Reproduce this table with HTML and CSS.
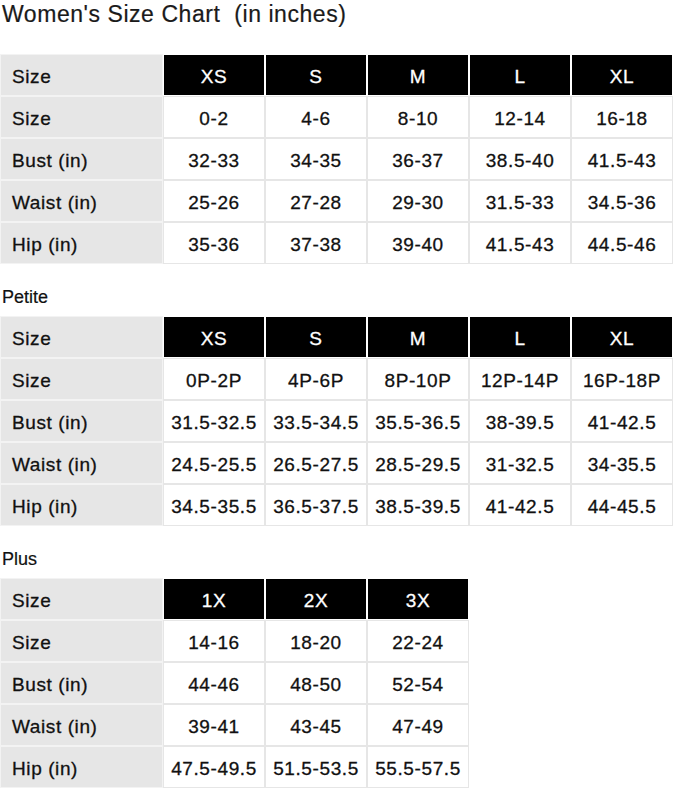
FILE: index.html
```html
<!DOCTYPE html>
<html>
<head>
<meta charset="utf-8">
<link rel="stylesheet" href="styles.css">
</head>
<body>
<h1 class="title">Women's Size Chart&nbsp; (in inches)</h1>

<div class="chart five">
  <div class="lab">Size</div>
  <div class="hd">XS</div><div class="hd">S</div><div class="hd">M</div><div class="hd">L</div><div class="hd">XL</div>
  <div class="lab">Size</div>
  <div class="v">0-2</div><div class="v">4-6</div><div class="v">8-10</div><div class="v">12-14</div><div class="v">16-18</div>
  <div class="lab">Bust (in)</div>
  <div class="v">32-33</div><div class="v">34-35</div><div class="v">36-37</div><div class="v">38.5-40</div><div class="v">41.5-43</div>
  <div class="lab">Waist (in)</div>
  <div class="v">25-26</div><div class="v">27-28</div><div class="v">29-30</div><div class="v">31.5-33</div><div class="v">34.5-36</div>
  <div class="lab">Hip (in)</div>
  <div class="v">35-36</div><div class="v">37-38</div><div class="v">39-40</div><div class="v">41.5-43</div><div class="v">44.5-46</div>
</div>

<div class="sec">Petite</div>

<div class="chart five">
  <div class="lab">Size</div>
  <div class="hd">XS</div><div class="hd">S</div><div class="hd">M</div><div class="hd">L</div><div class="hd">XL</div>
  <div class="lab">Size</div>
  <div class="v">0P-2P</div><div class="v">4P-6P</div><div class="v">8P-10P</div><div class="v">12P-14P</div><div class="v">16P-18P</div>
  <div class="lab">Bust (in)</div>
  <div class="v">31.5-32.5</div><div class="v">33.5-34.5</div><div class="v">35.5-36.5</div><div class="v">38-39.5</div><div class="v">41-42.5</div>
  <div class="lab">Waist (in)</div>
  <div class="v">24.5-25.5</div><div class="v">26.5-27.5</div><div class="v">28.5-29.5</div><div class="v">31-32.5</div><div class="v">34-35.5</div>
  <div class="lab">Hip (in)</div>
  <div class="v">34.5-35.5</div><div class="v">36.5-37.5</div><div class="v">38.5-39.5</div><div class="v">41-42.5</div><div class="v">44-45.5</div>
</div>

<div class="sec">Plus</div>

<div class="chart three">
  <div class="lab">Size</div>
  <div class="hd">1X</div><div class="hd">2X</div><div class="hd">3X</div>
  <div class="lab">Size</div>
  <div class="v">14-16</div><div class="v">18-20</div><div class="v">22-24</div>
  <div class="lab">Bust (in)</div>
  <div class="v">44-46</div><div class="v">48-50</div><div class="v">52-54</div>
  <div class="lab">Waist (in)</div>
  <div class="v">39-41</div><div class="v">43-45</div><div class="v">47-49</div>
  <div class="lab">Hip (in)</div>
  <div class="v">47.5-49.5</div><div class="v">51.5-53.5</div><div class="v">55.5-57.5</div>
</div>
</body>
</html>
```

FILE: styles.css
```css
html, body {
  margin: 0;
  padding: 0;
  background: #fff;
}
body {
  font-family: "Liberation Sans", Arial, sans-serif;
  color: #111;
}
.title {
  margin: 0;
  height: 54px;
  padding: 1px 0 0 2px;
  box-sizing: border-box;
  font-size: 23px;
  line-height: 26px;
  font-weight: normal;
  letter-spacing: 0.55px;
  color: #1a1a1a;
  -webkit-text-stroke: 0.2px #1a1a1a;
}
.chart {
  display: grid;
  grid-auto-rows: 42px;
  font-size: 19px;
  letter-spacing: 0.6px;
  -webkit-text-stroke: 0.3px currentColor;
}
.chart.five {
  grid-template-columns: 163px repeat(5, 102px);
}
.chart.three {
  grid-template-columns: 163px repeat(3, 102px);
}
.chart > div {
  box-sizing: border-box;
  display: flex;
  align-items: center;
  padding-top: 3px;
}
.lab {
  background: #e6e6e6;
  border: 1px solid #f3f3f3;
  padding-left: 11px;
}
.hd {
  background: #000;
  color: #fff;
  border: 1px solid #fff;
  justify-content: center;
}
.v {
  background: #fff;
  border: 1px solid #e6e6e6;
  justify-content: center;
}
.sec {
  height: 52px;
  box-sizing: border-box;
  display: flex;
  align-items: flex-end;
  padding: 0 0 9px 2px;
  font-size: 18px;
  line-height: 20px;
  -webkit-text-stroke: 0.2px currentColor;
}
```
